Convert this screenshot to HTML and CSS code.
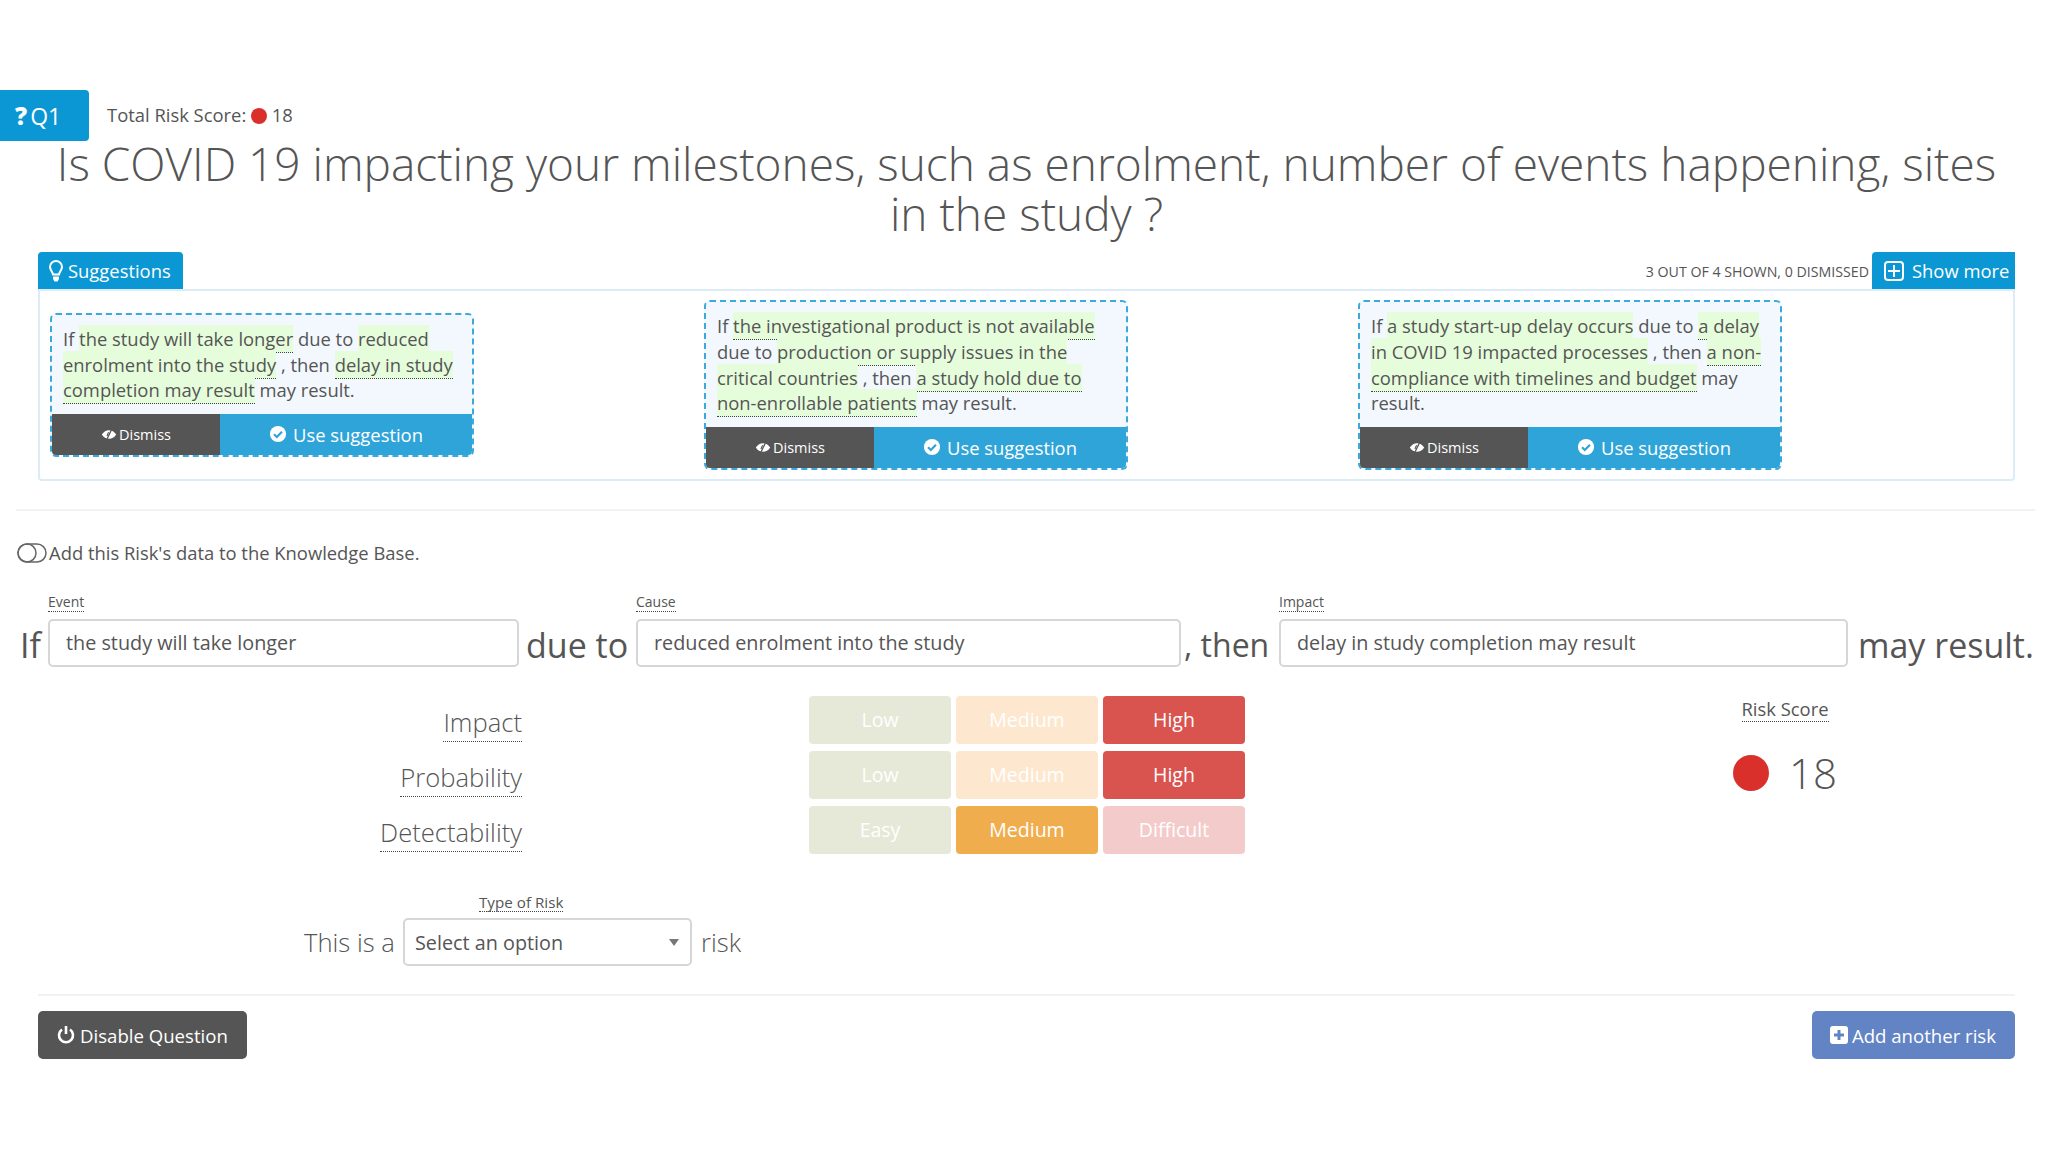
FILE: index.html
```html
<!DOCTYPE html>
<html lang="en">
<head>
    <meta charset="UTF-8">
    <title>Risk question</title>
    <link rel="stylesheet" href="styles.css">
</head>
<body>
    <svg class="defs" width="0" height="0" aria-hidden="true">
        <symbol id="check" viewBox="0 0 20 20">
            <circle cx="10" cy="10" r="9" fill="#fff"/>
            <path d="M5.6 10.2l3.1 3.1 5.7-5.9" fill="none" stroke="#2fa4d9" stroke-width="2.4"/>
        </symbol>
        <symbol id="eye" viewBox="0 0 20 16">
            <path d="M1 8c2.4-3.6 5.4-5.4 9-5.4S16.600 4.400 19 8c-2.400 3.600-5.400 5.400-9 5.400S3.400 11.600 1 8z" fill="#fff"/>
            <path d="M13.500 1L7 15" stroke="#555" stroke-width="1.600"/>
            <path d="M9.500 5.200L7.400 9.800" stroke="#555" stroke-width="1.400"/>
        </symbol>
    </svg>

    <div class="question-head">
        <div class="q-tab"><span class="q-mark">?</span>Q1</div>
        <div class="total-score">Total Risk Score: <span class="dot dot-small"></span> 18</div>
    </div>
    <h1 class="question-title">Is COVID 19 impacting your milestones, such as enrolment, number of events happening, sites in the study ?</h1>

    <section class="suggestions">
        <div class="suggestions-head">
            <div class="tab tab-suggestions">
                <svg class="bulb" viewBox="0 0 16 24"><path d="M8 2a6 6 0 0 0-6 6c0 3 2.500 4.500 3 7.500h6c.5-3 3-4.500 3-7.500a6 6 0 0 0-6-6z" fill="none" stroke="#fff" stroke-width="2"/><path d="M5 17.500h6v2.500l-1.500 2.500h-3L5 20z" fill="#fff"/></svg>
                Suggestions
            </div>
            <div class="suggestions-right">
                <span class="shown-count">3 out of 4 shown, 0 dismissed</span>
                <div class="tab tab-more">
                    <svg class="plus-outline" viewBox="0 0 20 20"><rect x="1" y="1" width="18" height="18" rx="3" fill="none" stroke="#fff" stroke-width="2"/><path d="M10 4v12M4 10h12" stroke="#fff" stroke-width="2"/></svg>
                    Show more
                </div>
            </div>
        </div>
        <div class="suggestions-panel">
            <div class="card">
                <p class="card-text">If <span class="hl">the study will take longer</span> due to <span class="hl">reduced enrolment into the study</span> , then <span class="hl">delay in study completion may result</span> may result.</p>
                <div class="card-actions">
                    <button class="btn-dismiss"><svg class="icon-eye"><use href="#eye"/></svg>Dismiss</button>
                    <button class="btn-use"><svg class="icon-check"><use href="#check"/></svg>Use suggestion</button>
                </div>
            </div>
            <div class="card">
                <p class="card-text">If <span class="hl">the investigational product is not available</span> due to <span class="hl">production or supply issues in the critical countries</span> , then <span class="hl">a study hold due to non-enrollable patients</span> may result.</p>
                <div class="card-actions">
                    <button class="btn-dismiss"><svg class="icon-eye"><use href="#eye"/></svg>Dismiss</button>
                    <button class="btn-use"><svg class="icon-check"><use href="#check"/></svg>Use suggestion</button>
                </div>
            </div>
            <div class="card">
                <p class="card-text">If <span class="hl">a study start-up delay occurs</span> due to <span class="hl">a delay in COVID 19 impacted processes</span> , then <span class="hl">a non-compliance with timelines and budget</span> may result.</p>
                <div class="card-actions">
                    <button class="btn-dismiss"><svg class="icon-eye"><use href="#eye"/></svg>Dismiss</button>
                    <button class="btn-use"><svg class="icon-check"><use href="#check"/></svg>Use suggestion</button>
                </div>
            </div>
        </div>
    </section>

    <hr class="rule-wide">

    <div class="kb-toggle">
        <svg class="toggle-icon" viewBox="0 0 30 20"><rect x="1" y="1" width="28" height="18" rx="9" fill="none" stroke="#666" stroke-width="1.500"/><circle cx="10" cy="10" r="9" fill="none" stroke="#666" stroke-width="1.500"/></svg>
        Add this Risk's data to the Knowledge Base.
    </div>

    <div class="statement">
        <span class="word word-if">If</span>
        <div class="field field-event">
            <label class="small-label">Event</label>
            <input class="text-input" type="text" value="the study will take longer">
        </div>
        <span class="word word-due">due to</span>
        <div class="field field-cause">
            <label class="small-label">Cause</label>
            <input class="text-input" type="text" value="reduced enrolment into the study">
        </div>
        <span class="word word-then">, then</span>
        <div class="field field-impact">
            <label class="small-label">Impact</label>
            <input class="text-input" type="text" value="delay in study completion may result">
        </div>
        <span class="word word-result">may result.</span>
    </div>

    <div class="assessment">
        <div class="matrix">
            <div class="matrix-row">
                <div class="matrix-label"><span>Impact</span></div>
                <div class="level low">Low</div>
                <div class="level medium">Medium</div>
                <div class="level high selected">High</div>
            </div>
            <div class="matrix-row">
                <div class="matrix-label"><span>Probability</span></div>
                <div class="level low">Low</div>
                <div class="level medium">Medium</div>
                <div class="level high selected">High</div>
            </div>
            <div class="matrix-row">
                <div class="matrix-label"><span>Detectability</span></div>
                <div class="level low">Easy</div>
                <div class="level medium selected">Medium</div>
                <div class="level high">Difficult</div>
            </div>
        </div>
        <div class="risk-score">
            <span class="risk-score-label">Risk Score</span>
            <div class="risk-score-value"><span class="dot"></span>18</div>
        </div>
    </div>

    <div class="risk-type">
        <span class="risk-type-word">This is a</span>
        <div class="field field-type">
            <label class="small-label">Type of Risk</label>
            <div class="select-wrap">
                <select class="select-input"><option>Select an option</option></select>
            </div>
        </div>
        <span class="risk-type-word risk-type-end">risk</span>
    </div>

    <hr class="rule-inner">

    <div class="footer-actions">
        <button class="btn btn-disable">
            <svg class="btn-icon" viewBox="0 0 18 20"><path d="M5 4.500a7 7 0 1 0 8 0" fill="none" stroke="#fff" stroke-width="2.600"/><path d="M9 1v8" stroke="#fff" stroke-width="2.600"/></svg>
            Disable Question
        </button>
        <button class="btn btn-add">
            <svg class="btn-icon" viewBox="0 0 18 18"><rect width="18" height="18" rx="3" fill="#fff"/><path d="M9 4v10M4 9h10" stroke="#6384c4" stroke-width="3"/></svg>
            Add another risk
        </button>
    </div>
</body>
</html>
```

FILE: styles.css
```css
* {
    margin: 0;
    padding: 0;
    box-sizing: border-box;
}

body {
    font-family: "Open Sans", sans-serif;
    font-size: 18.400px;
    line-height: 1.42857;
    color: #555;
    background: #fff;
    padding-top: 90px;
}

.defs {
    position: absolute;
}

.question-head {
    display: flex;
    align-items: center;
    height: 51px;
}

.q-tab {
    width: 89px;
    height: 51px;
    background: #0a97d4;
    color: #fff;
    border-radius: 0 4px 4px 0;
    font-size: 23px;
    line-height: 51px;
    padding-left: 15px;
}

.q-mark {
    font-weight: 800;
    font-size: 24px;
    margin-right: 3px;
}

.total-score {
    margin-left: 18px;
}

.dot {
    display: inline-block;
    width: 36px;
    height: 36px;
    border-radius: 50%;
    background: #d9302c;
}

.dot-small {
    width: 16px;
    height: 16px;
    vertical-align: -2px;
}

.question-title {
    font-size: 46px;
    font-weight: 300;
    line-height: 50px;
    text-align: center;
    color: #555;
    margin: -3px 33px 14px 38px;
    height: 100px;
}

.suggestions {
    margin: 0 33px 0 38px;
}

.suggestions-head {
    display: flex;
    justify-content: space-between;
    align-items: flex-end;
    height: 37px;
}

.suggestions-right {
    display: flex;
    align-items: center;
    gap: 3px;
}

.shown-count {
    font-size: 14.200px;
    text-transform: uppercase;
    padding-top: 4px;
}

.tab {
    display: flex;
    align-items: center;
    height: 37px;
    padding-top: 1px;
    background: #0a97d4;
    color: #fff;
}

.tab-suggestions {
    width: 145px;
    border-radius: 4px 4px 0 0;
    padding-left: 10px;
}

.bulb {
    width: 16px;
    height: 24px;
    margin-right: 4px;
}

.tab-more {
    width: 143px;
    padding-left: 12px;
    border-radius: 4px 0 0 0;
}

.plus-outline {
    width: 20px;
    height: 20px;
    margin-right: 8px;
}

.suggestions-panel {
    display: grid;
    grid-template-columns: repeat(3, 654px);
    align-items: center;
    height: 192px;
    padding: 0 10px;
    border: 2px solid #dcecf6;
    border-radius: 0 0 4px 4px;
}

.card {
    width: 424px;
    background: #f2f8fe;
    border: 2px dashed #3ba9dc;
    border-radius: 6px;
    overflow: hidden;
}

.card-text {
    padding: 11px 9px 11px 11px;
    line-height: 25.600px;
}

.hl {
    background: #e6fddc;
    padding: 1px 0;
    border-bottom: 1px dotted #444;
}

.card-actions {
    display: flex;
    height: 41px;
}

.card-actions button {
    border: 0;
    color: #fff;
    font-family: inherit;
    display: flex;
    align-items: center;
    justify-content: center;
}

.btn-dismiss {
    width: 168px;
    background: #555;
    font-size: 14.500px;
}

.btn-use {
    flex: 1;
    background: #2fa4d9;
    font-size: 18.400px;
}

.icon-eye {
    width: 16px;
    height: 13px;
    margin-right: 2px;
}

.icon-check {
    width: 18px;
    height: 18px;
    margin-right: 6px;
}

.rule-wide {
    border: 0;
    border-top: 2px solid #f2f2f2;
    margin: 28px 13px 0 16px;
}

.kb-toggle {
    display: flex;
    align-items: center;
    height: 26px;
    margin: 29px 0 0 17px;
}

.toggle-icon {
    width: 30px;
    height: 20px;
    margin-right: 2px;
}

.statement {
    display: flex;
    align-items: flex-end;
    margin-top: 27px;
    padding-left: 20px;
}

.word {
    font-size: 34px;
    line-height: 48px;
    margin-bottom: -2px;
    white-space: nowrap;
}

.word-if {
    width: 28px;
}

.word-due {
    width: 117px;
    padding-left: 7px;
}

.word-then {
    width: 98px;
    padding-left: 3px;
    font-size: 32px;
}

.word-result {
    padding-left: 10px;
}

.field-event {
    width: 471px;
}

.field-cause {
    width: 545px;
}

.field-impact {
    width: 569px;
}

.small-label {
    display: table;
    font-size: 14px;
    line-height: 18px;
    border-bottom: 1px dotted #444;
    margin-bottom: 7px;
}

.text-input {
    display: block;
    width: 100%;
    height: 48px;
    border: 2px solid #d6d6d6;
    border-radius: 5px;
    padding: 0 16px 2px;
    font-family: inherit;
    font-size: 19.800px;
    color: #555;
}

.assessment {
    display: flex;
    margin-top: 29px;
    align-items: flex-start;
}

.matrix {
    display: flex;
    flex-direction: column;
    gap: 7px;
}

.matrix-row {
    display: flex;
    height: 48px;
    gap: 5px;
}

.matrix-label {
    width: 522px;
    margin-right: 282px;
    text-align: right;
    font-size: 25.600px;
    font-weight: 300;
    line-height: 36px;
    padding-top: 9px;
}

.matrix-label span {
    display: inline-block;
    border-bottom: 1px dotted #444;
}

.level {
    width: 142px;
    border-radius: 4px;
    color: #fff;
    text-align: center;
    font-size: 19.500px;
    line-height: 48px;
}

.level.low {
    background: #e6e9d8;
}

.level.medium {
    background: #fde8cf;
}

.level.high {
    background: #f4cbcb;
}

.level.medium.selected {
    background: #f0ad4e;
}

.level.high.selected {
    background: #d9534f;
}

.risk-score {
    margin-left: 488px;
    width: 104px;
    text-align: center;
}

.risk-score-label {
    display: inline-block;
    line-height: 24px;
    margin-top: 1px;
    border-bottom: 1px dotted #444;
    white-space: nowrap;
}

.risk-score-value {
    display: flex;
    align-items: center;
    justify-content: space-between;
    margin-top: 31px;
    height: 40px;
    font-size: 42px;
    font-weight: 300;
}

.risk-type {
    display: flex;
    align-items: flex-end;
    margin-top: 39px;
    padding-left: 304px;
}

.risk-type-word {
    font-size: 25.600px;
    font-weight: 300;
    line-height: 46px;
    width: 99px;
}

.risk-type-end {
    padding-left: 9px;
}

.field-type {
    width: 289px;
}

.field-type .small-label {
    margin-left: 76px;
    margin-bottom: 6px;
    font-size: 15.200px;
}

.select-wrap {
    position: relative;
}

.select-wrap::after {
    content: "";
    position: absolute;
    right: 13px;
    top: 21px;
    border: 5px solid transparent;
    border-top: 7px solid #777;
    border-bottom: 0;
}

.select-input {
    display: block;
    width: 100%;
    height: 48px;
    appearance: none;
    background: #fff;
    border: 2px solid #d6d6d6;
    border-radius: 5px;
    padding: 0 10px;
    font-family: inherit;
    font-size: 19.800px;
    color: #555;
}

.rule-inner {
    border: 0;
    border-top: 2px solid #f2f2f2;
    margin: 28px 33px 0 38px;
}

.footer-actions {
    display: flex;
    justify-content: space-between;
    margin: 15px 33px 0 38px;
}

.btn {
    display: flex;
    align-items: center;
    height: 48px;
    border: 0;
    border-radius: 5px;
    color: #fff;
    font-family: inherit;
    font-size: 18.600px;
    padding: 0 19px 0 18px;
}

.btn-disable {
    background: #555;
}

.btn-add {
    background: #6384c4;
}

.btn-icon {
    width: 18px;
    height: 18px;
    margin-right: 4px;
}

.btn-disable .btn-icon {
    width: 20px;
    height: 20px;
}
```
